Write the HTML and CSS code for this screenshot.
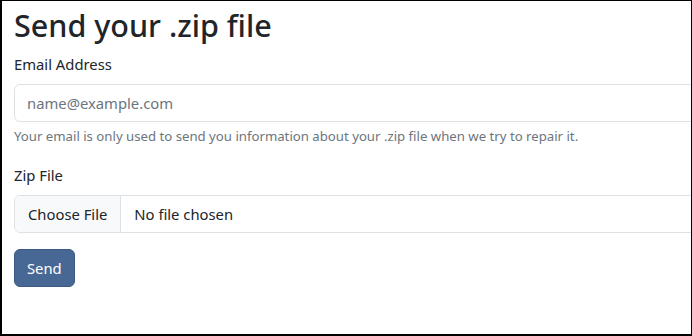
FILE: index.html
```html
<!DOCTYPE html>
<html lang="en">
<head>
  <meta charset="UTF-8" />
  <meta name="viewport" content="width=device-width, initial-scale=1.0"/>
  <title>Send your .zip file</title>
  <link rel="stylesheet" href="styles.css">
</head>
<body>
  <div class="frame">
    <form class="upload-form">
      <h1>Send your .zip file</h1>
      <div class="field">
        <label for="email">Email Address</label>
        <input type="email" id="email" class="form-control" placeholder="name@example.com">
        <div class="help">Your email is only used to send you information about your .zip file when we try to repair it.</div>
      </div>
      <div class="field">
        <label for="zipFile">Zip File</label>
        <input type="file" id="zipFile" class="form-control file-control" accept=".zip">
      </div>
      <button type="button" class="btn-send">Send</button>
    </form>
  </div>
</body>
</html>
```

FILE: styles.css
```css
html, body {
  margin: 0;
  padding: 0;
  background: #fff;
}
body {
  font-family: "Noto Sans", "Open Sans", Arial, sans-serif;
  font-size: 14.8px;
  line-height: 24px;
  color: #212529;
}
.frame {
  box-sizing: border-box;
  height: 336px;
  border: solid #000;
  border-width: 1px 1px 2px 2px;
  overflow: hidden;
  padding: 5px 12px 0 12px;
}
.upload-form {
  width: 820px;
}
h1 {
  font-size: 30.5px;
  font-weight: 500;
  line-height: 38px;
  margin: 0 0 8px 0;
}
.field {
  margin-bottom: 16px;
}
label {
  display: block;
  margin-bottom: 8px;
}
.form-control {
  display: block;
  box-sizing: border-box;
  width: 100%;
  height: 38px;
  padding: 6px 12px;
  font: inherit;
  color: #212529;
  background: #fff;
  border: 1px solid #dee2e6;
  border-radius: 6px;
  outline: none;
}
.form-control::placeholder {
  color: #6c757d;
}
.file-control {
  padding: 0;
  overflow: hidden;
  line-height: 36px;
}
.file-control::file-selector-button {
  font: inherit;
  color: #212529;
  background: #f8f9fa;
  border: none;
  border-right: 1px solid #dee2e6;
  height: 36px;
  padding: 0 13px;
  margin: 0 13px 0 0;
}
.help {
  margin-top: 4px;
  font-size: 13.2px;
  line-height: 21px;
  color: #6c757d;
}
.btn-send {
  font: inherit;
  color: #fff;
  background: #476894;
  border: 1px solid #3d5a82;
  border-radius: 6px;
  padding: 6px 12px;
  height: 38px;
  cursor: pointer;
}
```
